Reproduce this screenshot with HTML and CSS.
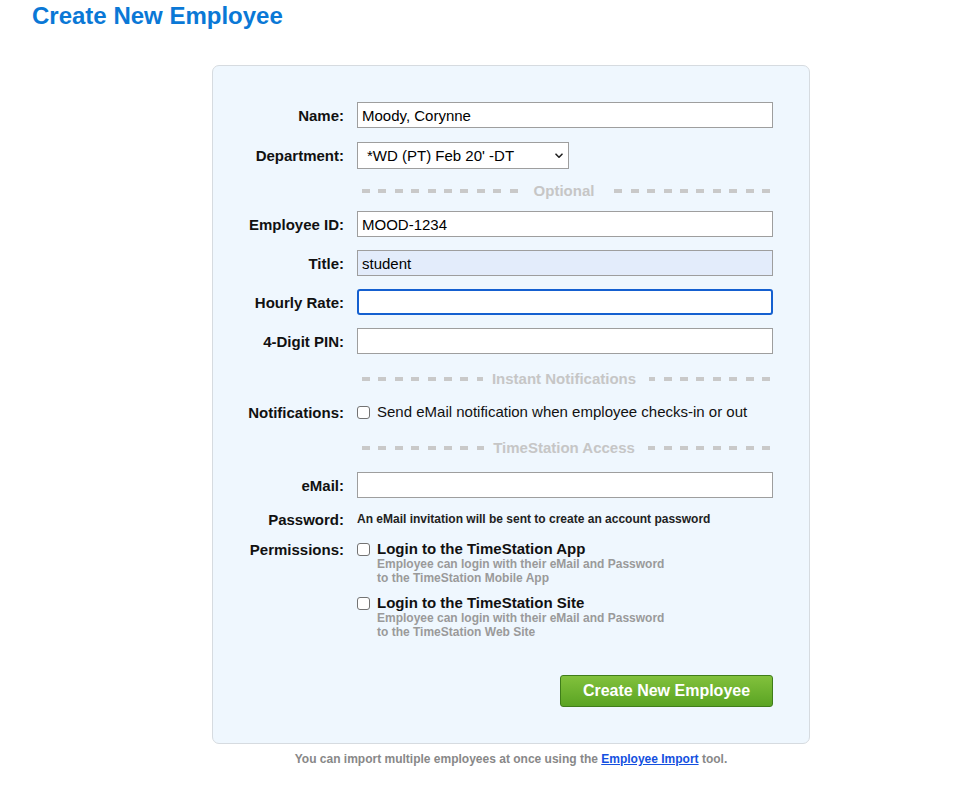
FILE: index.html
```html
<!DOCTYPE html>
<html>
<head>
<meta charset="utf-8">
<title>Create New Employee</title>
<link rel="stylesheet" href="styles.css">
</head>
<body>
<h1 class="page-title">Create New Employee</h1>
<div class="wrap">
  <form class="panel">
    <div class="row">
      <label class="lbl">Name:</label>
      <input class="txt" type="text" value="Moody, Corynne">
    </div>
    <div class="row row-dept">
      <label class="lbl">Department:</label>
      <div class="select">
        <span>*WD (PT) Feb 20' -DT</span>
        <svg class="chev" width="8" height="6" viewBox="0 0 8 6"><path d="M1 1.2 L4 4.2 L7 1.2" fill="none" stroke="#222" stroke-width="1.6" stroke-linecap="round" stroke-linejoin="round"/></svg>
      </div>
    </div>
    <div class="sep sep-1"><span class="dash"></span><span class="sep-text">Optional</span><span class="dash dash-r"></span></div>
    <div class="row">
      <label class="lbl">Employee ID:</label>
      <input class="txt" type="text" value="MOOD-1234">
    </div>
    <div class="row gap13">
      <label class="lbl">Title:</label>
      <input class="txt txt-fill" type="text" value="student">
    </div>
    <div class="row gap13">
      <label class="lbl">Hourly Rate:</label>
      <input class="txt txt-focus" type="text" value="">
    </div>
    <div class="row gap13">
      <label class="lbl">4-Digit PIN:</label>
      <input class="txt" type="text" value="">
    </div>
    <div class="sep sep-2"><span class="dash"></span><span class="sep-text">Instant Notifications</span><span class="dash dash-r"></span></div>
    <div class="row row-notif">
      <label class="lbl">Notifications:</label>
      <div class="check-line">
        <span class="cb"></span>
        <span class="check-text">Send eMail notification when employee checks-in or out</span>
      </div>
    </div>
    <div class="sep sep-3"><span class="dash"></span><span class="sep-text">TimeStation Access</span><span class="dash dash-r"></span></div>
    <div class="row row-email">
      <label class="lbl">eMail:</label>
      <input class="txt" type="text" value="">
    </div>
    <div class="row row-pass">
      <label class="lbl">Password:</label>
      <span class="note">An eMail invitation will be sent to create an account password</span>
    </div>
    <div class="row row-perms">
      <label class="lbl">Permissions:</label>
      <div class="opts">
        <div class="opt">
          <span class="cb"></span>
          <div class="opt-body">
            <div class="opt-title">Login to the TimeStation App</div>
            <div class="opt-sub">Employee can login with their eMail and Password<br>to the TimeStation Mobile App</div>
          </div>
        </div>
        <div class="opt opt-2">
          <span class="cb"></span>
          <div class="opt-body">
            <div class="opt-title">Login to the TimeStation Site</div>
            <div class="opt-sub">Employee can login with their eMail and Password<br>to the TimeStation Web Site</div>
          </div>
        </div>
      </div>
    </div>
    <div class="actions">
      <button type="button" class="btn">Create New Employee</button>
    </div>
  </form>
  <p class="footer">You can import multiple employees at once using the <a href="#" class="link">Employee Import</a> tool.</p>
</div>
</body>
</html>
```
FILE: styles.css
```css
html, body {
  margin: 0;
  padding: 0;
  background: #ffffff;
}
body {
  font-family: "Liberation Sans", Arial, sans-serif;
  color: #111;
}
.page-title {
  margin: 0 0 0 32px;
  padding-top: 2px;
  font-size: 24px;
  line-height: 28px;
  font-weight: bold;
  color: #0a78d6;
}
.wrap {
  margin: 35px 0 0 212px;
  width: 598px;
}
.panel {
  display: flex;
  flex-direction: column;
  box-sizing: border-box;
  width: 598px;
  margin: 0;
  padding: 36px 36px 36px 0;
  background: #eff7fe;
  border: 1px solid #d6dbe0;
  border-radius: 7px;
}
.row {
  display: flex;
  align-items: center;
  gap: 13px;
}
.lbl {
  flex: 0 0 131px;
  box-sizing: border-box;
  padding-top: 2px;
  text-align: right;
  font-size: 15px;
  font-weight: bold;
  color: #111;
  line-height: 18px;
}
.txt {
  box-sizing: border-box;
  width: 416px;
  height: 26px;
  margin: 0;
  padding: 0 4px;
  border: 1px solid #9e9e9e;
  border-radius: 0;
  background: #fff;
  font-family: "Liberation Sans", Arial, sans-serif;
  font-size: 15px;
  color: #000;
  outline: none;
}
.txt-fill {
  background: #e3ecfb;
}
.txt-focus {
  border: 2px solid #1560d0;
  border-radius: 3px;
  padding: 0 3px;
}
.gap13 {
  margin-top: 13px;
}
.row-dept {
  margin-top: 14px;
}
.row-dept .lbl {
  padding-top: 0;
}
.select {
  box-sizing: border-box;
  width: 212px;
  height: 27px;
  display: flex;
  align-items: center;
  justify-content: space-between;
  padding: 0 5px 0 9px;
  border: 1px solid #9e9e9e;
  background: #fff;
  font-size: 15px;
  color: #000;
}
.chev {
  display: block;
}
.sep {
  display: flex;
  align-items: center;
  box-sizing: border-box;
  margin-left: 149px;
  margin-right: 3px;
  height: 24px;
}
.sep-1 {
  height: 42px;
  padding-top: 2px;
}
.sep-2 {
  margin-top: 13px;
}
.sep-3 {
  margin-top: 14px;
}
.dash {
  flex: 1;
  height: 4px;
  background: repeating-linear-gradient(90deg, #c9c9c9 0 8px, transparent 8px 16.4px);
}
.dash-r {
  background: repeating-linear-gradient(270deg, #c9c9c9 0 8px, transparent 8px 16.4px);
}
.sep-text {
  padding: 0 13px 0 9px;
  font-size: 15px;
  font-weight: bold;
  color: #c6c6c6;
  line-height: 18px;
}
.row-notif {
  margin-top: 11px;
  height: 20px;
}
.check-line {
  display: flex;
  align-items: center;
  gap: 7px;
}
.cb {
  box-sizing: border-box;
  flex: 0 0 13px;
  width: 13px;
  height: 13px;
  border: 1px solid #737373;
  border-radius: 3px;
  background: #fff;
}
.check-text {
  font-size: 15px;
  color: #111;
  line-height: 18px;
}
.row-email {
  margin-top: 12px;
}
.row-pass {
  margin-top: 11px;
  height: 20px;
}
.note {
  font-size: 12px;
  font-weight: bold;
  color: #222;
}
.row-perms {
  margin-top: 12px;
  align-items: flex-start;
}
.row-perms .lbl {
  line-height: 16px;
  padding-top: 1px;
}
.opts {
  display: flex;
  flex-direction: column;
}
.opt {
  display: flex;
  align-items: flex-start;
  gap: 7px;
}
.opt .cb {
  margin-top: 2px;
}
.opt-2 {
  margin-top: 10px;
}
.opt-title {
  font-size: 15px;
  font-weight: bold;
  line-height: 16px;
  color: #111;
}
.opt-sub {
  font-size: 12px;
  font-weight: bold;
  line-height: 14px;
  color: #9a9a9a;
}
.actions {
  display: flex;
  justify-content: flex-end;
  margin-top: 36px;
}
.btn {
  box-sizing: border-box;
  width: 213px;
  height: 32px;
  margin: 0;
  padding: 0;
  border: 1px solid #3f7d1a;
  border-radius: 3px;
  background: linear-gradient(#82c13c, #5aa423);
  color: #fff;
  font-family: "Liberation Sans", Arial, sans-serif;
  font-size: 16px;
  font-weight: bold;
  cursor: pointer;
}
.footer {
  margin: 8px 0 0 0;
  text-align: center;
  font-size: 12px;
  font-weight: bold;
  line-height: 14px;
  color: #888;
}
.link {
  color: #1450e0;
  text-decoration: underline;
}
```
